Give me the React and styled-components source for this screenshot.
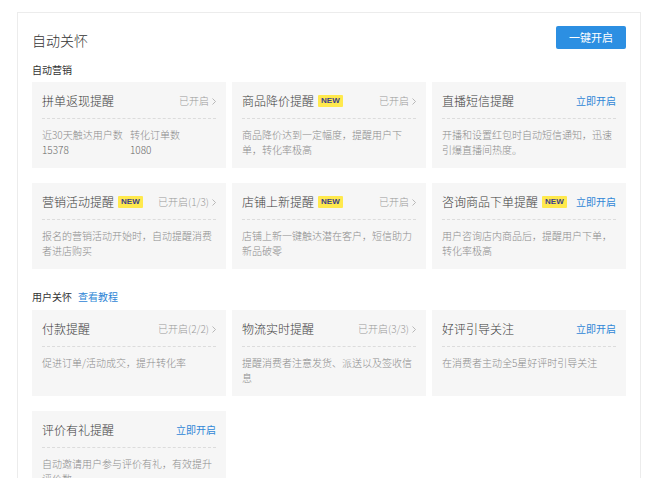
import React from "react";
import styled, { createGlobalStyle } from "styled-components";

const Global = createGlobalStyle`
  html, body { margin: 0; padding: 0; background: #fff; }
  body { font-family: "Noto Sans CJK SC", "Noto Sans", sans-serif; font-weight: 300; color: #333; }
  * { box-sizing: border-box; }
`;

const Page = styled.div`
  padding: 12px 20px 0 17px;
  height: 478px;
  overflow: hidden;
`;

const Panel = styled.div`
  width: 624px;
  border: 1px solid #ececec;
  border-bottom: none;
  padding: 0 14px 20px;
  min-height: 480px;
`;

const Header = styled.div`
  display: flex;
  justify-content: space-between;
  align-items: flex-start;
  padding-top: 13px;
`;

const Title = styled.h1`
  margin: 4px 0 0;
  font-size: 14px;
  line-height: 20px;
  font-weight: 300;
  color: #333;
`;

const PrimaryButton = styled.button`
  width: 70px;
  height: 23px;
  border: none;
  border-radius: 2px;
  background: #2c8fe2;
  color: #fff;
  font-family: inherit;
  font-weight: 400;
  font-size: 11px;
  line-height: 23px;
  padding: 0;
  cursor: pointer;
`;

const SectionLabel = styled.div`
  margin: ${(p) => p.$top}px 0 ${(p) => p.$bottom}px;
  font-size: 10px;
  line-height: 14px;
  font-weight: 400;
  color: #333;
  display: flex;
  gap: 6px;
`;

const Link = styled.a`
  color: #2f86d6;
  text-decoration: none;
  cursor: pointer;
`;

const Grid = styled.div`
  display: grid;
  grid-template-columns: repeat(3, 194px);
  column-gap: 6px;
  row-gap: 15px;
`;

const Card = styled.div`
  height: 86px;
  background: #f6f6f6;
  padding: 0 10px;
`;

const CardHead = styled.div`
  display: flex;
  align-items: center;
  justify-content: space-between;
  padding: 10px 0 8px;
  border-bottom: 1px dashed #dcdcdc;
  height: 37px;
`;

const CardTitle = styled.div`
  display: flex;
  align-items: center;
  font-size: 12px;
  line-height: 18px;
  color: #3a3a3a;
`;

const Badge = styled.span`
  margin-left: 4px;
  background: #ffe94d;
  color: #3b3f8c;
  font-family: "Liberation Sans", Arial, sans-serif;
  font-weight: 700;
  font-size: 8px;
  line-height: 12px;
  padding: 0 3px;
  border-radius: 1px;
`;

const Status = styled.span`
  display: flex;
  align-items: center;
  gap: 3px;
  font-size: 10px;
  line-height: 18px;
  color: ${(p) => (p.$link ? "#2f86d6" : "#999")};
  font-weight: ${(p) => (p.$link ? 400 : 300)};
  cursor: pointer;
`;

const Desc = styled.div`
  padding-top: 8px;
  font-size: 10px;
  line-height: 15px;
  color: #8c8c8c;
`;

const Stats = styled.div`
  display: grid;
  grid-template-columns: 88px auto;
`;

const Value = styled.div`
  color: #666;
`;

const Chevron = () => (
  <svg width="4" height="7" viewBox="0 0 4 7">
    <path d="M0.5 0.5 L3.5 3.5 L0.5 6.5" fill="none" stroke="#aaa" strokeWidth="0.8" />
  </svg>
);

function Item({ title, isNew, status, link, children }) {
  return (
    <Card>
      <CardHead>
        <CardTitle>
          {title}
          {isNew && <Badge>NEW</Badge>}
        </CardTitle>
        {link ? (
          <Status $link>立即开启</Status>
        ) : (
          <Status>
            {status}
            <Chevron />
          </Status>
        )}
      </CardHead>
      <Desc>{children}</Desc>
    </Card>
  );
}

export default function App() {
  return (
    <>
      <Global />
      <Page>
        <Panel>
          <Header>
            <Title>自动关怀</Title>
            <PrimaryButton>一键开启</PrimaryButton>
          </Header>
          <SectionLabel $top={13} $bottom={5}>自动营销</SectionLabel>
          <Grid>
            <Item title="拼单返现提醒" status="已开启">
              <Stats>
                <div>近30天触达用户数</div>
                <div>转化订单数</div>
                <Value>15378</Value>
                <Value>1080</Value>
              </Stats>
            </Item>
            <Item title="商品降价提醒" isNew status="已开启">
              商品降价达到一定幅度，提醒用户下单，转化率极高
            </Item>
            <Item title="直播短信提醒" link>
              开播和设置红包时自动短信通知，迅速引爆直播间热度。
            </Item>
            <Item title="营销活动提醒" isNew status="已开启(1/3)">
              报名的营销活动开始时，自动提醒消费者进店购买
            </Item>
            <Item title="店铺上新提醒" isNew status="已开启">
              店铺上新一键触达潜在客户，短信助力新品破零
            </Item>
            <Item title="咨询商品下单提醒" isNew link>
              用户咨询店内商品后，提醒用户下单，转化率极高
            </Item>
          </Grid>
          <SectionLabel $top={21} $bottom={6}>
            <span>用户关怀</span>
            <Link>查看教程</Link>
          </SectionLabel>
          <Grid>
            <Item title="付款提醒" status="已开启(2/2)">
              促进订单/活动成交，提升转化率
            </Item>
            <Item title="物流实时提醒" status="已开启(3/3)">
              提醒消费者注意发货、派送以及签收信息
            </Item>
            <Item title="好评引导关注" link>
              在消费者主动全5星好评时引导关注
            </Item>
            <Item title="评价有礼提醒" link>
              自动邀请用户参与评价有礼，有效提升评价数
            </Item>
          </Grid>
        </Panel>
      </Page>
    </>
  );
}
